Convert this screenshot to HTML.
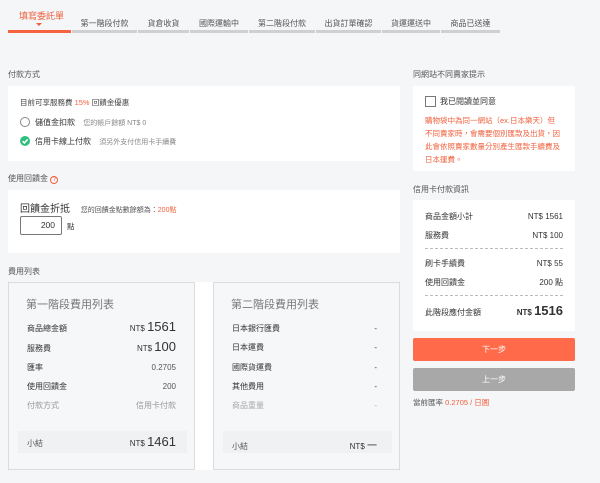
<!DOCTYPE html>
<html><head><meta charset="utf-8"><style>
*{margin:0;padding:0;box-sizing:border-box}
body{width:600px;height:483px;background:#f5f6f8;font-family:"Liberation Sans","Noto Sans CJK TC",sans-serif;color:#333;position:relative;overflow:hidden;font-size:8px}
.a{position:absolute;white-space:nowrap}
.w{position:absolute;background:#fff}
.seg{position:absolute;top:30px;height:3px;background:#d0d0d2}
.st{position:absolute;top:18px;font-size:8px;color:#555;text-align:center}
.lbl{font-size:8px;color:#555}
.red{color:#f0613e}
.card{position:absolute;background:#f6f7f8;border:1px solid #dcdcdc}
.row{position:absolute;left:0;right:0;font-size:8px;color:#333;display:flex;justify-content:space-between;align-items:baseline;white-space:nowrap}
.big{font-size:13px}
</style></head><body>
<div class="a red" style="left:19px;top:9px;font-size:9px">填寫委託單</div>
<div class="a" style="left:36px;top:23px;width:0;height:0;border-left:3px solid transparent;border-right:3px solid transparent;border-top:3px solid #f0613e"></div>
<div class="seg" style="left:8px;width:63px;background:#f5633f"></div>
<div class="seg" style="left:72px;width:65px"></div>
<div class="seg" style="left:138px;width:51px"></div>
<div class="seg" style="left:190px;width:58px"></div>
<div class="seg" style="left:249px;width:66px"></div>
<div class="seg" style="left:316px;width:65px"></div>
<div class="seg" style="left:382px;width:58px"></div>
<div class="seg" style="left:441px;width:59px"></div>
<div class="st" style="left:72px;width:65px">第一階段付款</div>
<div class="st" style="left:138px;width:51px">貨倉收貨</div>
<div class="st" style="left:190px;width:58px">國際運輸中</div>
<div class="st" style="left:249px;width:66px">第二階段付款</div>
<div class="st" style="left:316px;width:65px">出貨訂單確認</div>
<div class="st" style="left:382px;width:58px">貨運運送中</div>
<div class="st" style="left:441px;width:59px">商品已送達</div>

<div class="a lbl" style="left:8px;top:69px">付款方式</div>
<div class="w" style="left:8px;top:86px;width:392px;height:75px"></div>
<div class="a" style="left:20px;top:97px;font-size:7.5px;color:#444">目前可享服務費 <span class="red">15%</span> 回饋金優惠</div>
<div class="a" style="left:20px;top:117px;width:10px;height:10px;border:1px solid #888;border-radius:50%"></div>
<div class="a" style="left:35px;top:117px;font-size:8px">儲值金扣款 <span style="color:#888;font-size:7px;margin-left:6px">您的帳戶餘額 NT$ 0</span></div>
<div class="a" style="left:20px;top:136px;width:10px;height:10px;background:#2dbf7e;border-radius:50%"><svg width="10" height="10" style="position:absolute;left:0;top:0"><path d="M2.6 5.2 L4.4 7 L7.6 3.4" stroke="#fff" stroke-width="1.5" fill="none"/></svg></div>
<div class="a" style="left:35px;top:136px;font-size:8px">信用卡線上付款 <span style="color:#888;font-size:7px;margin-left:6px">須另外支付信用卡手續費</span></div>

<div class="a lbl" style="left:8px;top:173px">使用回饋金 <span class="red" style="display:inline-block;width:8px;height:8px;border:1px solid #f0613e;border-radius:50%;font-size:6px;line-height:6px;text-align:center">?</span></div>
<div class="w" style="left:8px;top:190px;width:392px;height:63px"></div>
<div class="a" style="left:20px;top:200px;font-size:10px;color:#333">回饋金折抵 <span style="font-size:7px;color:#555;margin-left:8px">您的回饋金點數餘額為：<span class="red">200點</span></span></div>
<div class="a" style="left:20px;top:216px;width:42px;height:19px;border:1px solid #777;border-radius:2px;background:#fff;text-align:right;padding-right:6px;font-size:8.5px;line-height:17px">200</div>
<div class="a" style="left:67px;top:221px;font-size:7.5px">點</div>

<div class="a lbl" style="left:8px;top:266px">費用列表</div>
<div class="w" style="left:8px;top:282px;width:392px;height:188px"></div>
<div class="card" style="left:8px;top:282px;width:187px;height:188px">
 <div class="a" style="left:17px;top:13px;font-size:11px;color:#777">第一階段費用列表</div>
 <div style="position:absolute;left:18px;right:18px;top:0;height:100%">
  <div class="row" style="top:36px"><span>商品總金額</span><span>NT$ <span class="big">1561</span></span></div>
  <div class="row" style="top:56px"><span>服務費</span><span>NT$ <span class="big">100</span></span></div>
  <div class="row" style="top:79px"><span>匯率</span><span style="color:#555">0.2705</span></div>
  <div class="row" style="top:98px"><span>使用回饋金</span><span style="color:#555">200</span></div>
  <div class="row" style="top:117px;color:#999"><span>付款方式</span><span>信用卡付款</span></div>
 </div>
 <div class="a" style="left:9px;top:148px;width:169px;height:22px;background:#f0f1f3"></div>
 <div class="row" style="left:18px;right:18px;top:151px"><span style="color:#555">小結</span><span>NT$ <span class="big">1461</span></span></div>
</div>
<div class="card" style="left:213px;top:282px;width:187px;height:188px">
 <div class="a" style="left:17px;top:13px;font-size:11px;color:#777">第二階段費用列表</div>
 <div style="position:absolute;left:18px;right:22px;top:0;height:100%">
  <div class="row" style="top:40px"><span>日本銀行匯費</span><span>-</span></div>
  <div class="row" style="top:59px"><span>日本運費</span><span>-</span></div>
  <div class="row" style="top:79px"><span>國際貨運費</span><span>-</span></div>
  <div class="row" style="top:98px"><span>其他費用</span><span>-</span></div>
  <div class="row" style="top:117px;color:#aaa"><span>商品重量</span><span>-</span></div>
 </div>
 <div class="a" style="left:9px;top:148px;width:169px;height:22px;background:#f0f1f3"></div>
 <div class="row" style="left:18px;right:22px;top:154px"><span style="color:#555">小結</span><span>NT$ <span style="font-size:10px">一</span></span></div>
</div>

<div class="a lbl" style="left:413px;top:69px">同網站不同賣家提示</div>
<div class="w" style="left:413px;top:86px;width:162px;height:85px"></div>
<div class="a" style="left:425px;top:96px;width:11px;height:11px;border:1px solid #777;background:#fff"></div>
<div class="a" style="left:440px;top:96px;font-size:8px">我已閱讀並同意</div>
<div class="a red" style="left:425px;top:114px;font-size:7.5px;line-height:13px;white-space:normal;width:136px">購物袋中為同一網站（ex.日本樂天）但不同賣家時，會需要個別匯款及出貨，因此會依照賣家數量分別產生匯款手續費及日本運費。</div>

<div class="a lbl" style="left:413px;top:184px">信用卡付款資訊</div>
<div class="w" style="left:413px;top:200px;width:162px;height:131px"></div>
<div style="position:absolute;left:425px;width:138px;top:0;height:483px">
 <div class="row" style="top:211px"><span>商品金額小計</span><span>NT$ 1561</span></div>
 <div class="row" style="top:230px"><span>服務費</span><span>NT$ 100</span></div>
 <div class="a" style="left:0;top:248px;width:138px;border-top:1px dashed #bbb"></div>
 <div class="row" style="top:258px"><span>刷卡手續費</span><span>NT$ 55</span></div>
 <div class="row" style="top:277px"><span>使用回饋金</span><span>200 點</span></div>
 <div class="a" style="left:0;top:295px;width:138px;border-top:1px dashed #bbb"></div>
 <div class="row" style="top:303px"><span>此階段應付金額</span><span><b>NT$</b> <b class="big">1516</b></span></div>
</div>
<div class="a" style="left:413px;top:338px;width:162px;height:23px;background:#ff6a4a;border-radius:2px;color:#fff;text-align:center;line-height:23px;font-size:8px">下一步</div>
<div class="a" style="left:413px;top:368px;width:162px;height:23px;background:#a8a8a8;border-radius:2px;color:#fff;text-align:center;line-height:23px;font-size:8px">上一步</div>
<div class="a" style="left:413px;top:397px;font-size:7.5px;color:#555">當前匯率 <span class="red">0.2705 / 日圓</span></div>
</body></html>
